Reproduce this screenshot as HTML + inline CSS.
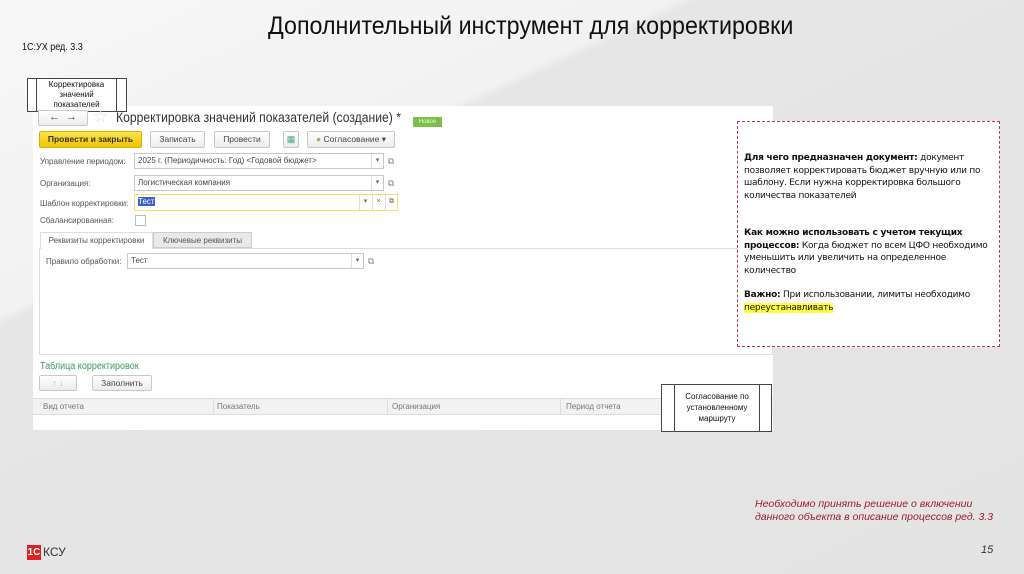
<!DOCTYPE html>
<html><head><meta charset="utf-8"><style>
*{margin:0;padding:0;box-sizing:border-box}
body{width:1024px;height:574px;overflow:hidden;position:relative;font-family:"Liberation Sans",sans-serif;
background:linear-gradient(155deg,#f7f7f7 0%,#f2f2f2 30%,#e6e6e6 31%,#e3e3e3 100%);}
.a{position:absolute}
.s{font-size:8px;color:#555}
.btn{position:absolute;border:1px solid #c8c8c8;border-radius:2px;background:linear-gradient(#fff,#ececec);font-size:8.5px;color:#444;text-align:center;line-height:15px}
.fld{position:absolute;border:1px solid #c8c8c8;background:#fff;font-size:8px;color:#444;line-height:13px;padding-left:3px}
.dd{position:absolute;top:0;width:12px;height:100%;border-left:1px solid #ddd;font-size:7px;text-align:center;color:#666}
.lk{position:absolute;width:12px;height:14px;font-size:9px;color:#888;text-align:center;line-height:14px}
</style></head><body>
<div class="a" style="left:268px;top:12px;width:530px;white-space:nowrap;font-size:25px;color:#111;transform:scaleX(0.93);transform-origin:0 0">Дополнительный инструмент для корректировки</div>
<div class="a" style="left:22px;top:42px;font-size:10px;color:#111;transform:scaleX(0.9);transform-origin:0 0">1С:УХ ред. 3.3</div>

<div class="a" style="left:33px;top:106px;width:740px;height:324px;background:#fff"></div>
<div class="a" style="left:27px;top:78px;width:100px;height:34px;border:1px solid #444;background:#fff"></div>
<div class="a" style="left:36px;top:78px;width:81px;height:34px;border-left:1px solid #444;border-right:1px solid #444;font-size:8px;text-align:center;line-height:10px;padding-top:2px;color:#111">Корректировка значений показателей</div>

<div class="btn" style="left:38px;top:110px;width:50px;height:16px;font-size:11px;line-height:13px">←&nbsp;&nbsp;→</div>
<div class="a" style="left:93px;top:107px;font-size:17px;color:#ddd">☆</div>
<div class="a" style="left:116px;top:110px;font-size:13.5px;color:#333;white-space:nowrap;transform:scaleX(0.9);transform-origin:0 0">Корректировка значений показателей (создание) *</div>
<div class="a" style="left:413px;top:117px;width:29px;height:10px;background:#7cc04a;color:#dfd;font-size:6px;text-align:center;line-height:10px">Новое</div>

<div class="btn" style="left:39px;top:131px;width:103px;height:17px;background:linear-gradient(#fbe34a,#f0c400);border-color:#d9b300;color:#333;font-weight:bold">Провести и закрыть</div>
<div class="btn" style="left:150px;top:131px;width:55px;height:17px">Записать</div>
<div class="btn" style="left:214px;top:131px;width:56px;height:17px">Провести</div>
<div class="btn" style="left:283px;top:131px;width:16px;height:17px;color:#4a8;font-size:9px">▦</div>
<div class="btn" style="left:307px;top:131px;width:88px;height:17px"><span style="color:#9b4">●</span> Согласование ▾</div>

<div class="a s" style="left:40px;top:157px">Управление периодом:</div>
<div class="fld" style="left:134px;top:153px;width:250px;height:16px">2025 г. (Периодичность: Год) &lt;Годовой бюджет&gt;<div class="dd" style="right:0">▾</div></div>
<div class="lk" style="left:385px;top:154px">⧉</div>
<div class="a s" style="left:40px;top:179px">Организация:</div>
<div class="fld" style="left:134px;top:175px;width:250px;height:16px">Логистическая компания<div class="dd" style="right:0">▾</div></div>
<div class="lk" style="left:385px;top:176px">⧉</div>
<div class="a s" style="left:40px;top:199px">Шаблон корректировки:</div>
<div class="fld" style="left:134px;top:194px;width:264px;height:17px;border-color:#f1e26a"><span style="background:#3c5fc8;color:#fff">Тест</span><div class="dd" style="right:26px">▾</div><div class="dd" style="right:13px">×</div><div class="dd" style="right:0">⧉</div></div>
<div class="a s" style="left:40px;top:216px">Сбалансированная:</div>
<div class="a" style="left:135px;top:215px;width:11px;height:11px;border:1px solid #bbb;background:#fff"></div>

<div class="a" style="left:39px;top:248px;width:734px;height:107px;border:1px solid #ddd"></div>
<div class="a" style="left:40px;top:232px;width:113px;height:17px;border:1px solid #ddd;border-bottom:none;background:#fff;font-size:8px;color:#555;text-align:center;line-height:16px">Реквизиты корректировки</div>
<div class="a" style="left:153px;top:232px;width:99px;height:16px;border:1px solid #ccc;background:#e9e9e9;font-size:8px;color:#555;text-align:center;line-height:15px">Ключевые реквизиты</div>
<div class="a s" style="left:46px;top:257px">Правило обработки:</div>
<div class="fld" style="left:127px;top:253px;width:237px;height:16px">Тест<div class="dd" style="right:0">▾</div></div>
<div class="lk" style="left:365px;top:254px">⧉</div>

<div class="a" style="left:40px;top:361px;font-size:10px;color:#3a9a5a;transform:scaleX(0.9);transform-origin:0 0;white-space:nowrap">Таблица корректировок</div>
<div class="btn" style="left:39px;top:375px;width:38px;height:16px;color:#aaa">↑ ↓</div>
<div class="btn" style="left:92px;top:375px;width:60px;height:16px">Заполнить</div>
<div class="a" style="left:33px;top:398px;width:740px;height:17px;background:#f2f2f2;border-top:1px solid #ddd;border-bottom:1px solid #ddd"></div>
<div class="a s" style="left:43px;top:402px;color:#777">Вид отчета</div>
<div class="a" style="left:213px;top:398px;width:1px;height:17px;background:#ddd"></div>
<div class="a s" style="left:217px;top:402px;color:#777">Показатель</div>
<div class="a" style="left:387px;top:398px;width:1px;height:17px;background:#ddd"></div>
<div class="a s" style="left:392px;top:402px;color:#777">Организация</div>
<div class="a" style="left:560px;top:398px;width:1px;height:17px;background:#ddd"></div>
<div class="a s" style="left:566px;top:402px;color:#777">Период отчета</div>

<div class="a" style="left:661px;top:384px;width:111px;height:48px;border:1px solid #444;background:#fff"></div>
<div class="a" style="left:674px;top:384px;width:86px;height:48px;border-left:1px solid #444;border-right:1px solid #444;font-size:8px;text-align:center;line-height:11px;padding-top:7px;color:#111">Согласование по установленному маршруту</div>

<div class="a" style="left:737px;top:121px;width:263px;height:226px;border:1px dashed #b04050;background:#fff"></div>
<div class="a" style="left:744px;top:152px;width:248px;font-family:'DejaVu Sans',sans-serif;font-size:9px;letter-spacing:-0.25px;line-height:12.5px;color:#111">
<div><b>Для чего предназначен документ:</b> документ позволяет корректировать бюджет вручную или по шаблону. Если нужна корректировка большого количества показателей</div>
<div style="margin-top:25px"><b>Как можно использовать с учетом текущих процессов:</b> Когда бюджет по всем ЦФО необходимо уменьшить или увеличить на определенное количество</div>
<div style="margin-top:12px"><b>Важно:</b> При использовании, лимиты необходимо <span style="background:#ffff40">переустанавливать</span></div>
</div>

<div class="a" style="left:755px;top:498px;font-size:10.5px;line-height:13px;font-style:italic;color:#9b1b30;white-space:nowrap">Необходимо принять решение о включении<br>данного объекта в описание процессов ред. 3.3</div>
<div class="a" style="left:981px;top:544px;font-size:11px;font-style:italic;color:#333">15</div>
<div class="a" style="left:27px;top:545px;width:14px;height:15px;background:#d22;color:#fff;font-size:10px;font-weight:bold;line-height:15px;text-align:center">1С</div>
<div class="a" style="left:43px;top:545px;font-size:12px;color:#333">КСУ</div>
</body></html>
